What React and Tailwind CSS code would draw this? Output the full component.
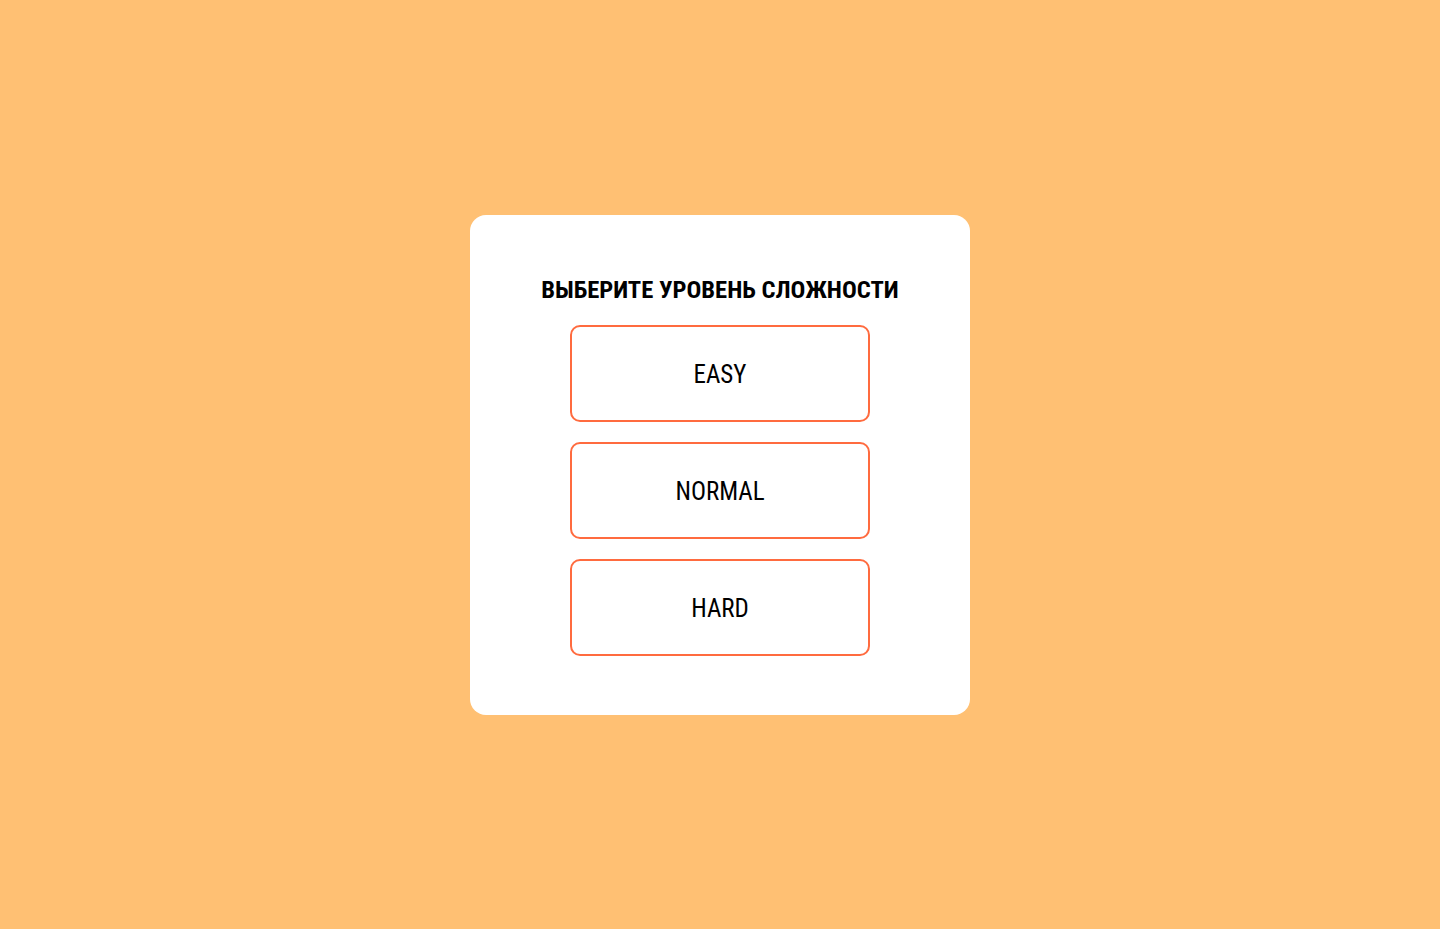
const levels = ["EASY", "NORMAL", "HARD"];

const App = () => {
  return (
    <div className="min-h-screen w-full bg-[#ffc073] flex items-center justify-center font-['Roboto_Condensed','Liberation_Sans_Narrow',Roboto,sans-serif]">
      <div className="w-[500px] h-[500px] bg-white rounded-2xl flex flex-col items-center pt-[62px]">
        <h2 className="text-[24.6px] leading-[26px] font-bold text-black uppercase mb-[22px]">
          Выберите уровень сложности
        </h2>
        <div className="flex flex-col gap-[20px]">
          {levels.map((level) => (
            <button
              key={level}
              className="w-[300px] h-[97px] pt-[4px] border-2 border-[#ff6b3f] rounded-[10px] bg-white text-[25px] text-black"
            >
              {level}
            </button>
          ))}
        </div>
      </div>
    </div>
  );
};

export default App;
